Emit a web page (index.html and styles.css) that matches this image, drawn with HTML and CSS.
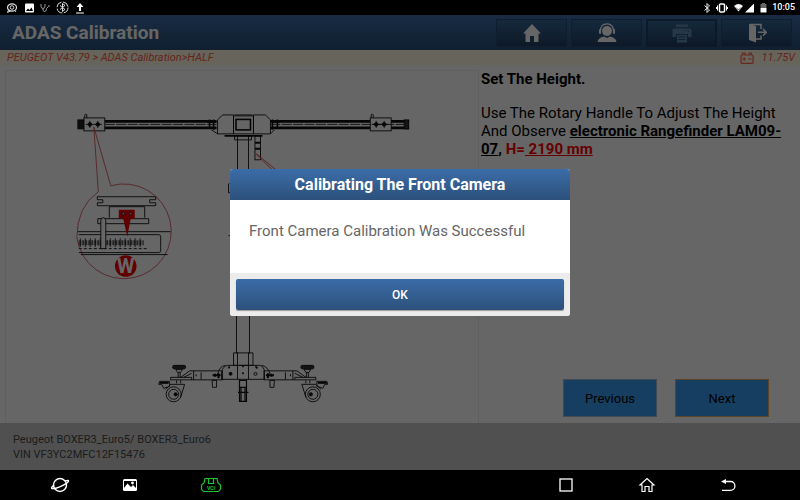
FILE: index.html
```html
<!DOCTYPE html>
<html lang="en">
<head>
<meta charset="utf-8">
<meta name="viewport" content="width=device-width, initial-scale=1">
<title>ADAS Calibration</title>
<link rel="stylesheet" href="styles.css">
</head>
<body>
<div class="statusbar">
  <div class="status-left">
    <svg width="12" height="12" viewBox="0 0 12 12" fill="none" stroke="#ddd"><ellipse cx="6" cy="5.5" rx="4.5" ry="3.6" stroke-width="1.2"/><circle cx="6" cy="5.500" r="1.800"/><path d="M2.500 8 1.500 10.500 4.500 9M9 8.500 10 10"/></svg>
    <svg width="10" height="12" viewBox="0 0 10 12"><rect x="1" y="1.500" width="9" height="9" rx="1" fill="#fff"/><path d="M2 9 4 6.500 5.500 8 7.500 5.500 9 9Z" fill="#000"/></svg>
    <svg width="10" height="12" viewBox="0 0 10 12" fill="none" stroke="#999"><path d="M1 2V4Q1 6.500 3 6.500T5 4V2M3 6.500V8Q3 9.500 4.500 9.500T6.500 7.500V6.500L8.500 4.500M8 4H10"/></svg>
    <svg width="13" height="13" viewBox="0 0 13 13" fill="none" stroke="#ddd"><circle cx="6.500" cy="6.500" r="5.500" stroke-dasharray="7 1.600"/><path d="M4 4.500 9 8.500 6.500 10.500V2.500L9 4.500 4 8.500"/></svg>
    <svg width="10" height="12" viewBox="0 0 10 12"><path d="M5 1 8.500 5H6V9H4V5H1.500ZM1 10.500H9V11.500H1Z" fill="#fff"/></svg>
  </div>
  <div class="status-right">
    <svg width="8" height="12" viewBox="0 0 8 12" fill="none" stroke="#eee"><path d="M1.500 3.500 6.500 8 4 10.500V1.500L6.500 4 1.500 8.500"/></svg>
    <svg width="12" height="12" viewBox="0 0 12 12" fill="none" stroke="#fff"><rect x="3.500" y="2" width="5" height="8" rx="1" stroke-width="1.500"/><path d="M1.500 3.500V8.500M10.500 3.500V8.500M.5 5V7M11.500 5V7"/></svg>
    <svg width="22" height="12" viewBox="0 0 22 12"><path d="M1 4Q5.500 0 10 4L5.500 9.500Z" fill="#fff"/><path d="M3 5.500 5.500 8 8 5.500" stroke="#555" fill="none"/><path d="M12 10.500H21V1.500Z" fill="#fff"/></svg>
    <svg width="7" height="12" viewBox="0 0 7 12"><path d="M2 1H5V2H6.500V6H.5V2H2Z" fill="#666"/><path d="M.5 6H6.500V10.500H.5Z" fill="#fff"/></svg>
    <time>10:05</time>
  </div>
</div>

<div class="app">
  <header class="header">
    <h1>ADAS Calibration</h1>
    <nav class="tools" aria-label="Tools">
      <button type="button" aria-label="Home"><svg width="20" height="20" viewBox="0 0 20 20" fill="#fff"><path d="M10 1 19 10.500H16.500V19H12V13H8V19H3.500V10.500H1Z"/></svg></button>
      <button type="button" aria-label="Support"><svg width="20" height="20" viewBox="0 0 20 20" fill="#fff"><circle cx="10" cy="8" r="5"/><path d="M3.500 8Q3.500.8 10 .8T16.500 8" fill="none" stroke="#fff" stroke-width="1.200"/><rect x="2" y="6" width="2" height="5" rx="1"/><rect x="16" y="6" width="2" height="5" rx="1"/><path d="M.5 19Q1 14.500 7 13.500L10 15 13 13.500Q19 14.500 19.500 19Z"/></svg></button>
      <button type="button" aria-label="Print" disabled><svg width="20" height="20" viewBox="0 0 20 20" fill="#5f8ab5"><path d="M4 1.500H16V4H4ZM2 5.500H18Q19.500 5.500 19.500 7V14H16V11H4V14H.5V7Q.5 5.500 2 5.500ZM5 12H15V19.500H5Z"/><path d="M6.500 14H13.500M6.500 16.500H13.500M13.500 8H14.500M16 8H17" stroke="#264f7c"/></svg></button>
      <button type="button" aria-label="Exit"><svg width="20" height="20" viewBox="0 0 20 20"><path d="M2 1 9 3V19.500L2 17Z" fill="#fff"/><path d="M3 1.500H14V6M14 12.500V16H9" fill="none" stroke="#fff" stroke-width="1.500"/><path d="M11 9.300H19M16 6 19.300 9.300 16 12.600" fill="none" stroke="#fff" stroke-width="1.500"/></svg></button>
    </nav>
  </header>

  <div class="trail">
    <span>PEUGEOT V43.79 &gt; ADAS Calibration&gt;HALF</span>
    <span class="voltage"><svg width="14" height="12" viewBox="0 0 14 12" fill="none" stroke="#ff6350" stroke-width="1.200"><rect x="1" y="3" width="12" height="8.400" rx="1"/><path d="M2.500 3V1H5V3M9 3V1H11.500V3M2.500 7H6M4.250 5.200V8.800M8 7H11.500"/></svg>11.75V</span>
  </div>

  <main class="content">
    <figure class="diagram">
      <svg viewBox="0 0 473 352" role="img" aria-label="Calibration stand">
        <defs>
          <g id="clamp">
            <rect x="84" y="118" width="21" height="13"/><path d="M85 118V115L86 114 87 115V118M86 124.500H94M94 124.500H102M90 121V128M98 121V128"/>
            <circle cx="90" cy="124.500" r="1.800" fill="#111"/><circle cx="98" cy="124.500" r="1.800" fill="#111"/>
          </g>
          <g id="foot">
            <rect x="173" y="366" width="13" height="3.500" rx="1.500" fill="#333"/><path d="M176 370H183L181 373H178ZM178.500 373V378M180.500 373V378M171 378H192V380.500H171ZM181 378 190 371.500H223V380.500H192M194 371.500V380.500M201.500 373V380M184 378 192 374"/>
            <path d="M213 376H221M215.500 374.500V377.500M219 374V379M196 376H197" stroke-width="2"/>
            <path d="M177 381V384M181 381V384M171 385H185L181 398M171 385 166 390M160 382H170V387L164 389 162 385H159Z"/>
            <circle cx="174" cy="395" r="7.500"/><circle cx="174" cy="395" r="5"/><circle cx="176" cy="395" r="1.600" fill="#111"/><path d="M160 383.500H169" stroke-width="2"/>
            <path d="M212.500 381H217V388H213Z"/>
          </g>
        </defs>
        <g transform="translate(-6 -71)" fill="none" stroke="#111" stroke-width=".9">
          <rect x="78" y="120" width="6" height="9" fill="#222"/>
          <path d="M105 121.500H217M271 121.500H371M392 121.500H410M105 128H217M271 128H371M392 128H410" stroke-width="2.800"/>
          <path d="M105 124.500H217M271 124.500H410" stroke="#222" stroke-dasharray="10 1.400"/>
          <rect x="405" y="120" width="4.500" height="9" fill="#333"/>
          <use href="#clamp"/><use href="#clamp" x="287"/>
          <path d="M218 120 223 115H234V134H218ZM271 120 266 115H254V134H271ZM234 116H254V134H234ZM218 134 212 130M271 134 275 130M235 115H253"/>
          <rect x="236.500" y="119.500" width="14.500" height="10.500" stroke-width="1.600"/>
          <path d="M208 122H217M210 119.500V129M214 119.500V130M272 122H280M273 119.500V130M278 119.500V129M225 136H263" stroke-width="1.600"/>
          <path d="M235 136H252V140H235ZM238 136V170M249 136V170M237 310V354M250 310V354"/>
          <rect x="255.500" y="136" width="5.500" height="24"/><path d="M255.500 143H261M255.500 149H261" stroke-width="2"/>
          <g stroke="#d45560"><path d="M94 127 98.500 192Q77 207 77 238A47.500 47.500 0 1 0 111 186L94 127M256 154 273 170M257 154 279 172"/></g>
          <path d="M97.500 197H156V200H150V203H156V206H97.500V203H103V200H97.500ZM109.500 207H145V218M109.500 207V218M98 219H149V224H98ZM78 232H171M79 235H159Q161 235 161 237V251Q161 253 159 253H79M81 255H168"/>
          <path d="M80 243H145" stroke-width="9" stroke-dasharray=".8 4.200"/>
          <path d="M79 243H144" stroke-width="5" stroke-dasharray=".7 .8"/><path d="M79 249H147" stroke-dasharray="3 2"/>
          <path d="M101 249V221Q101 218 103.500 218T106 221V249Z" fill="#fff"/>
          <path d="M119 210H135V219H131L127.500 237 123.500 219H119Z" fill="#f00000" stroke="none"/><circle cx="123.500" cy="214" r="1.200" fill="#fff"/><circle cx="131" cy="214" r="1.200" fill="#fff"/>
          <circle cx="126" cy="266.500" r="10.800" fill="#f00000" stroke="none"/><text x="126" y="273" class="marker">W</text>
          <path d="M229 184V193H231M230 184 232 182M229 236H231"/>
          <path d="M234 353.500H253.500V366H234ZM238 353V380M249 353V380M222 380V373Q223 367 228 366H260Q265 367 265 373V380ZM218 376Q219 367 226 366M262 366Q269 367 271 376"/>
          <path d="M243.500 366V368M243.500 373V375M230 367 229 369M256 367 258 369" stroke-width="1.600"/>
          <circle cx="231" cy="374.500" r="1.500" fill="#111"/><circle cx="256" cy="374.500" r="1.500"/>
          <use href="#foot"/><use href="#foot" transform="translate(487.500 0) scale(-1 1)"/>
          <path d="M240 381H247V388H240ZM240 388H247V402H240ZM238.500 393H249M241.500 388V402M245.500 388V402" stroke-width="1.200"/>
        </g>
      </svg>
    </figure>
    <section class="panel">
      <div class="instructions">
        <h2>Set The Height.</h2>
        <p>Use The Rotary Handle To Adjust The Height And Observe <b><u>electronic Rangefinder LAM09-07</u>, <span class="value">H=<u> 2190 mm</u></span></b></p>
      </div>
      <div class="steps">
        <button type="button">Previous</button>
        <button type="button" class="next">Next</button>
      </div>
    </section>
  </main>

  <footer class="vehicle">
    <div>Peugeot BOXER3_Euro5/ BOXER3_Euro6</div>
    <div>VIN VF3YC2MFC12F15476</div>
  </footer>

  <div class="backdrop">
    <section class="dialog" role="dialog" aria-modal="true" aria-labelledby="dialog-title">
      <h2 id="dialog-title">Calibrating The Front Camera</h2>
      <p>Front Camera Calibration Was Successful</p>
      <div class="actions"><button type="button">OK</button></div>
    </section>
  </div>
</div>

<nav class="navbar" aria-label="System">
  <div class="nav-group">
    <button type="button" aria-label="Browser"><svg width="20" height="18" viewBox="0 0 20 18" fill="none" stroke="#fff" stroke-width="1.400"><circle cx="10" cy="9" r="6.500"/><path d="M4 9Q.5 12 2 12.500C5 13.500 20 7 18.500 4.500Q18 4 15 5"/></svg></button>
    <button type="button" aria-label="Gallery"><svg width="20" height="18" viewBox="0 0 20 18"><rect x="3" y="3" width="14" height="12" rx="1.500" fill="#fff"/><path d="M4 12V5H16V12L13 9 11 11 7.500 7.500Z" fill="#000"/><circle cx="12.500" cy="7" r="1.400" fill="#fff"/></svg></button>
    <button type="button" class="device" aria-label="VCI"><svg width="22" height="18" viewBox="0 0 22 18" fill="none" stroke="#17c52c" stroke-width="1.200"><path d="M5 2.500H17L18 7 20.500 9V13L18.500 15.500H3.500L1.500 13V9L4 7ZM8.500 3V7.500H13.500V3"/><text x="11" y="13.500" class="vci">VCI</text></svg></button>
  </div>
  <div class="nav-group nav-system">
    <button type="button" aria-label="Recent apps"><svg width="18" height="18" viewBox="0 0 18 18" fill="none" stroke="#fff" stroke-width="1.300"><rect x="3" y="3" width="12" height="12"/></svg></button>
    <button type="button" aria-label="Home screen"><svg width="18" height="18" viewBox="0 0 18 18" fill="none" stroke="#fff" stroke-width="1.200"><path d="M2 9 9 2.500 16 9H14V15.500H11V10.500H7V15.500H4V9Z"/></svg></button>
    <button type="button" aria-label="Back"><svg width="18" height="18" viewBox="0 0 18 18" fill="none" stroke="#fff" stroke-width="1.300"><path d="M5 5.500H11.500A4.300 4.300 0 0 1 11.500 14.300H3"/><path d="M2 5.500 7 3V8Z" fill="#fff" stroke="none"/></svg></button>
  </div>
</nav>
</body>
</html>
```

FILE: styles.css
```css
* { box-sizing: border-box; }
body {
  margin: 0;
  min-height: 100vh;
  display: flex;
  flex-direction: column;
  background: #000;
  font-family: Roboto, "Liberation Sans", sans-serif;
  color: #000;
}
h1, h2, p, figure { margin: 0; }
button { font: inherit; color: inherit; border: 0; padding: 0; }
svg { display: block; }

.statusbar {
  height: 15px;
  padding: 0 5px 0 6px;
  display: flex;
  align-items: center;
  justify-content: space-between;
  color: #fff;
  line-height: 15px;
}
.status-left, .status-right { display: flex; align-items: center; }
.status-left { gap: 6px; }
.status-right { gap: 5px; }
.status-right time { font-size: 9px; font-weight: 500; }

.app {
  position: relative;
  flex: 1;
  display: flex;
  flex-direction: column;
  background: #fff;
}
.header {
  height: 35px;
  padding: 0 8px 0 12px;
  display: flex;
  align-items: center;
  justify-content: space-between;
  background: linear-gradient(#3c6da8, #2b4f79);
}
.header h1 { color: #fff; font-size: 19px; line-height: 24px; font-weight: 700; }
.tools { display: flex; gap: 4px; }
.tools button {
  width: 71px;
  height: 28px;
  display: grid;
  place-items: center;
  background: linear-gradient(#346797, #233f63);
  border: 1px solid #274a74;
}
.tools button:disabled { border: 2px solid #213f62; }

.trail {
  height: 15px;
  padding: 0 5px 0 7px;
  display: flex;
  align-items: center;
  justify-content: space-between;
  background: #fffbe4;
  color: #ff5c48;
  font-size: 11px;
  line-height: 15px;
  font-style: italic;
}
.voltage { display: flex; align-items: center; gap: 7px; }

.content { flex: 1; display: grid; grid-template-columns: 474fr 321fr; padding: 5px 0 0 5px; }
.diagram { border: solid #eee; border-width: 1px 1px 0; }
.diagram svg { width: 100%; }
.marker { font: 700 20px Roboto, sans-serif; fill: #fff; stroke: none; text-anchor: middle; }
.panel { display: flex; flex-direction: column; justify-content: space-between; padding: 0 0 6px 2px; }
.instructions { font-size: 15px; line-height: 18px; padding-right: 12px; }
.instructions h2 { font-size: 15px; line-height: 18px; margin-bottom: 16px; }
.value { color: #f00; }
.steps { display: flex; justify-content: flex-end; gap: 18px; padding-right: 31px; }
.steps button {
  width: 94px;
  height: 38px;
  background: #389cf0;
  border: 1px solid #a9b8c8;
  font-size: 13px;
}
.steps .next { border-color: #e8aa5a; }

.vehicle {
  height: 47px;
  padding: 9px 13px;
  background: #c8c8c8;
  color: #484848;
  font-size: 11px;
  line-height: 15px;
}

.backdrop {
  position: absolute;
  inset: 0;
  display: grid;
  place-items: center;
  background: rgba(0, 0, 0, .6);
}
.dialog {
  width: 340px;
  max-width: 90%;
  overflow: hidden;
  border-radius: 3px;
  background: #fff;
}
.dialog h2 {
  padding: 4px 0 3px;
  background: linear-gradient(#3b6ca8, #2c517b);
  color: #fff;
  font-size: 16px;
  line-height: 24px;
  text-align: center;
}
.dialog p { padding: 19px 19px 30px; color: #666; font-size: 15px; line-height: 24px; }
.actions { padding: 6px; background: #ececec; }
.actions button {
  display: block;
  width: 100%;
  height: 31px;
  border-radius: 2px;
  background: linear-gradient(#3b6ca8, #2c517b);
  box-shadow: 0 1px 1px #999;
  color: #fff;
  font-size: 12px;
  font-weight: 500;
}

.navbar {
  height: 30px;
  padding: 0 63px 0 50px;
  display: flex;
  align-items: center;
  justify-content: space-between;
}
.navbar button { background: none; }
.nav-group { display: flex; gap: 50px; }
.nav-system { gap: 63px; }
.device { padding: 0 10px; }
.vci { font: 700 5px Roboto, sans-serif; fill: #17c52c; stroke: none; text-anchor: middle; }
```
